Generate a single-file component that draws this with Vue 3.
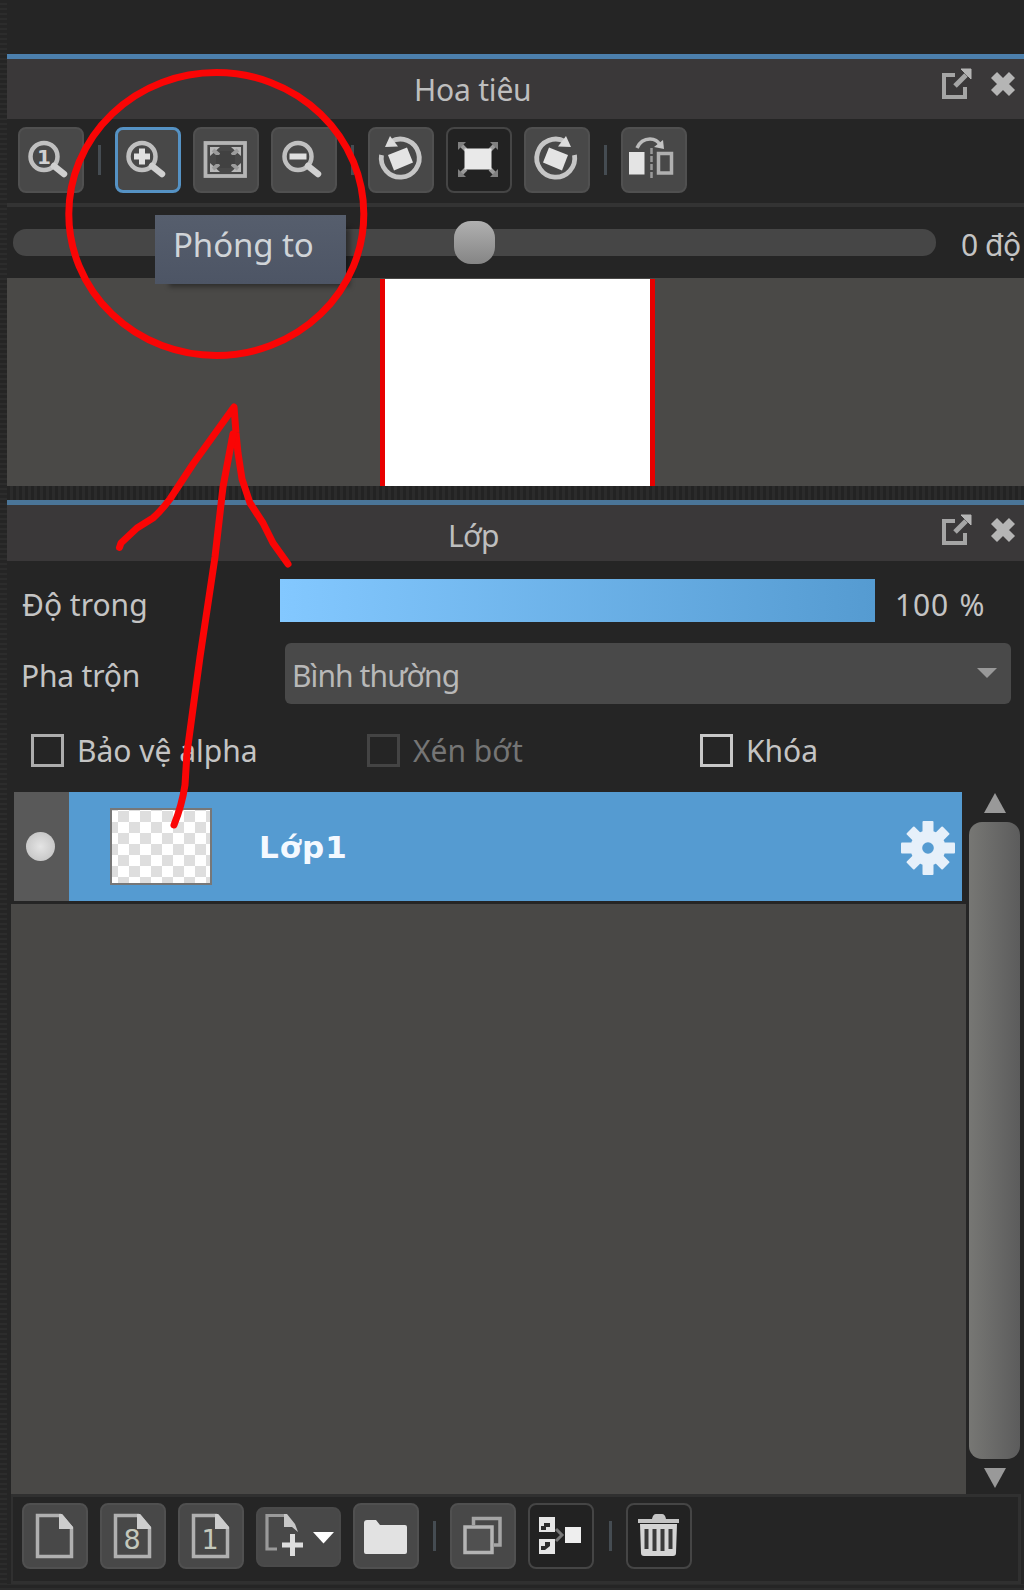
<template>
  <div class="app">
    <section class="panel navigator">
      <header class="title">
        <span class="caption nav-caption">Hoa tiêu</span>
        <svg class="title-icons" viewBox="0 0 84 36" v-html="titleIcons"></svg>
      </header>
      <div class="toolbar">
        <template v-for="(tool, i) in navTools" :key="i">
          <i v-if="tool.icon === 'sep'" class="sep"></i>
          <button v-else :class="['tool', tool.state]">
            <svg viewBox="0 0 66 66" v-html="icons[tool.icon]"></svg>
          </button>
        </template>
      </div>
      <div class="angle">
        <div class="track"><div class="knob"></div></div>
        <span class="angle-value">0 độ</span>
      </div>
      <div class="preview"><div class="canvas"></div></div>
      <div class="tooltip"><span>Phóng to</span></div>
    </section>
    <div class="splitter"></div>
    <section class="panel layers">
      <header class="title small">
        <span class="caption layer-caption">Lớp</span>
        <svg class="title-icons" viewBox="0 0 84 36" v-html="titleIcons"></svg>
      </header>
      <div class="row opacity">
        <span class="label label-opacity">Độ trong</span>
        <div class="bar"></div>
        <span class="percent">{{ opacity }} %</span>
      </div>
      <div class="row blend">
        <span class="label label-blend">Pha trộn</span>
        <div class="select">
          <span>Bình thường</span>
          <i class="caret"></i>
        </div>
      </div>
      <div class="checks">
        <label
          v-for="check in checks"
          :key="check.text"
          :class="['check', check.name]"
        >
          <i class="box"></i>
          <span>{{ check.text }}</span>
        </label>
      </div>
      <div class="body">
        <div class="list">
          <div class="layer">
            <div class="eye"><i></i></div>
            <div class="thumb"></div>
            <span class="name">Lớp1</span>
            <svg class="gear" viewBox="-27 -27 54 54">
              <g fill="#e6f0fa">
                <rect
                  v-for="n in 4"
                  :key="n"
                  x="-5.5"
                  :y="n % 2 ? -27 : -25.5"
                  width="11"
                  :height="n % 2 ? 54 : 51"
                  rx="1"
                  :transform="`rotate(${n * 45 - 45})`"
                />
                <circle r="17.5" />
              </g>
              <circle r="5.8" fill="#559bd1" />
            </svg>
          </div>
        </div>
        <div class="scroll">
          <i class="up"></i>
          <div class="handle"></div>
          <i class="down"></i>
        </div>
      </div>
      <div class="toolbar bottom">
        <template v-for="(tool, i) in layerTools" :key="i">
          <i v-if="tool.icon === 'sep'" class="sep"></i>
          <button v-else :class="['tool', tool.state]">
            <svg
              :viewBox="tool.state === 'wide' ? '0 0 85 60' : '0 0 66 66'"
              v-html="icons[tool.icon]"
            ></svg>
          </button>
        </template>
      </div>
    </section>
    <svg class="ink" viewBox="0 0 1024 1590">
      <g
        fill="none"
        stroke="#fa0505"
        stroke-width="7"
        stroke-linecap="round"
        stroke-linejoin="round"
      >
        <ellipse cx="216.3" cy="214" rx="147.5" ry="141.5" />
        <path
          d="M119.5 547.500L121 543L137 528L153 518Q161 511 170 499L193 464L234 407L236 433L238 453L242 479L250 503L263 523L273 543L288 564"
        />
        <path
          d="M233 434L223 487L215 557L200 657L187 753L185 785Q182 805 174 825"
        />
      </g>
    </svg>
  </div>
</template>
<script setup>
import { ref } from "vue";
const opacity = ref(100);
const checks = [
  { text: "Bảo vệ alpha", name: "protect" },
  { text: "Xén bớt", name: "clip" },
  { text: "Khóa", name: "lock" },
];
const navTools = [
  { icon: "zoomOne" },
  { icon: "sep" },
  { icon: "zoomIn", state: "active" },
  { icon: "fit" },
  { icon: "zoomOut" },
  { icon: "sep" },
  { icon: "rotateLeft" },
  { icon: "reset", state: "flat" },
  { icon: "rotateRight" },
  { icon: "sep" },
  { icon: "flip" },
];
const layerTools = [
  { icon: "page" },
  { icon: "page8" },
  { icon: "page1" },
  { icon: "pageAdd", state: "wide" },
  { icon: "folder" },
  { icon: "sep" },
  { icon: "copy" },
  { icon: "merge", state: "flat" },
  { icon: "sep" },
  { icon: "trash", state: "flat" },
];
const titleIcons = `
  <path d="M18 8H7V30H28V20" fill="none" stroke="#a5a5a5" stroke-width="4"/>
  <path d="M18 19L29 8" stroke="#a5a5a5" stroke-width="5"/>
  <path d="M24 2H34V12Z" fill="#b5b5b5" stroke="#b5b5b5"/>
  <path d="M57 8L75 26M75 8L57 26" stroke="#b5b5b5" stroke-width="8.5"/>`;
const lens = `
  <circle cx="27" cy="29.500" r="13.500" fill="none" stroke="#c0c0c0" stroke-width="4.500"/>
  <path d="M37 39L47 47" stroke="#d0d0d0" stroke-width="6.500" stroke-linecap="round"/>`;
const rotate = `
  <path d="M13.500 28A19 19 0 1 0 23 14.500" fill="none" stroke="#c6c6c6" stroke-width="4.800"/>
  <path d="M22 9L17 20L30 19.500Z" fill="#dcdcdc"/>
  <path d="M20 28L39 20.500L45 35.500L26 43.500Z" fill="#e4e4e4"/>`;
const sheet = `
  <path d="M39 12.500H15.500V53.500H49.500V25L39 12.500" fill="none" stroke="#b0b0b0" stroke-width="3.500"/>
  <path d="M37 11V26H51V24L40 11Z" fill="#cdcdcd"/>`;
const icons = {
  zoomOne: `<g transform="translate(-1 0)">${lens}</g>
    <text x="26" y="37" font-size="20" font-weight="bold" text-anchor="middle" fill="#d0d0d0">1</text>`,
  zoomIn: `${lens}<path d="M27 21.500V37.500M19 29.500H35" stroke="#e0e0e0" stroke-width="6"/>`,
  zoomOut: `${lens}<path d="M18.500 29.500H35.500" stroke="#e0e0e0" stroke-width="6"/>`,
  fit: `<rect x="12.500" y="16" width="39.500" height="33" fill="none" stroke="#b5b5b5" stroke-width="3.800"/>
    <path d="M17 20H27L17 29ZM48 20H38L48 29ZM17 45H27L17 36ZM48 45H38L48 36Z" fill="#b8b8b8"/>
    <path d="M20 23L26 28M45 23L39 28M20 42L26 37M45 42L39 37" stroke="#9c9c9c" stroke-width="4"/>
    <path d="M23 28H42V37H23ZM27 24H38V41H27Z" fill="#414141"/>`,
  rotateLeft: rotate,
  rotateRight: `<g transform="matrix(-1 0 0 1 64 0)">${rotate}</g>`,
  reset: `<path d="M14 17L20 23M50 17L44 23M14 48L20 42M50 48L44 42" stroke="#999" stroke-width="4"/>
    <path d="M12 15H20L12 23ZM52 15H44L52 23ZM12 50H20L12 42ZM52 50H44L52 42Z" fill="#808080"/>
    <rect x="18.500" y="21.500" width="27" height="21" fill="#e9e9e9"/>`,
  flip: `<rect x="8" y="25" width="15.500" height="22.500" fill="#e4e4e4"/>
    <path d="M30.500 21V51" stroke="#999" stroke-width="2.500" stroke-dasharray="6 2"/>
    <rect x="37.500" y="26.500" width="13" height="19.500" fill="none" stroke="#b0b0b0" stroke-width="3.500"/>
    <path d="M16 21Q20 12 29 12Q36 12 39 18" fill="none" stroke="#bbb" stroke-width="3.500"/>
    <path d="M33 20L42 13L43 22Z" fill="#c4c4c4"/>`,
  page: sheet,
  page8: `${sheet}<text x="32" y="46" font-size="27" text-anchor="middle" fill="#c4c8bc">8</text>`,
  page1: `${sheet}<text x="32" y="46" font-size="27" text-anchor="middle" fill="#c4c8bc">1</text>`,
  pageAdd: `<path d="M30 8.500H11V42H21" fill="none" stroke="#9a9a9a" stroke-width="3.200"/>
    <path d="M28 7V20H36L42 25L39 17L31 7Z" fill="#c8c8c8"/>
    <path d="M36.500 27V49M26 38H47" stroke="#ddd" stroke-width="5"/>
    <path d="M57 25H78L67.500 36.500Z" fill="#fff"/>`,
  folder: `<path d="M11 20Q11 17 14 17H23L27 22H52Q54 22 54 24V49Q54 51 52 51H13Q11 51 11 49Z" fill="#e2e2e2"/>`,
  copy: `<path d="M23.500 22V15.500H50V42H44" fill="none" stroke="#a5a5a5" stroke-width="3.500"/>
    <rect x="15" y="24" width="27" height="25.500" fill="#505050" stroke="#b4b4b4" stroke-width="3.500"/>`,
  merge: `<path d="M11 14H27V29H11ZM11 36H27V51H11Z" fill="#e6e6e6"/>
    <path d="M16 20H22V24H18V27H13V23H16ZM22 39H17V43H13V47H17L22 43Z" fill="#2c2c2c"/>
    <path d="M28 26L34 32L28 38" fill="none" stroke="#777" stroke-width="3"/>
    <rect x="37" y="24" width="16" height="16" fill="#eee"/>`,
  trash: `<path d="M12 16H26Q27 11 30 11H36Q39 11 40 16H53V20H12Z" fill="#c4c4c4"/>
    <path d="M14 21H51L50 50Q50 53 47 53H18Q15 53 15 50Z" fill="#d4d4d4"/>
    <path d="M20.500 26V46M28.500 26V48M36.500 26V48M44.500 26V46" stroke="#3a3a3a" stroke-width="4"/>`,
};
</script>
<style>
body {
  background: #252525;
}
</style>
<style scoped>
.app {
  position: relative;
  box-sizing: border-box;
  width: 1024px;
  height: 1590px;
  padding: 54px 0 0 7px;
  overflow: hidden;
  color: #c4c4c4;
  font-family: "Noto Sans", sans-serif;
  font-size: 30px;
  line-height: 36px;
  white-space: nowrap;
  background:
    linear-gradient(#252525, #252525) 7px 0 / 100% 1584px no-repeat,
    repeating-linear-gradient(#252525 0 3px, #2c2c2c 3px 5px);
}
.panel {
  position: relative;
  border-top: 5px solid #4c7fac;
}
.navigator {
  height: 427px;
}
.title {
  display: flex;
  justify-content: flex-end;
  height: 60px;
  padding-right: 3px;
  background: #3a3839;
}
.title.small {
  height: 56px;
}
.caption {
  width: 523px;
  margin-top: 13px;
  color: #bebebe;
}
.nav-caption {
  letter-spacing: -0.2px;
}
.layer-caption {
  width: 489px;
  letter-spacing: -0.6px;
}
.title-icons {
  width: 84px;
  height: 36px;
  margin-top: 8px;
}
.toolbar {
  display: flex;
  gap: 11.7px;
  box-sizing: border-box;
  height: 88px;
  padding: 8px 0 0 11px;
  border-bottom: 4px solid #333;
}
.tool {
  flex: none;
  box-sizing: border-box;
  width: 66px;
  height: 66px;
  padding: 0;
  background: #484848;
  border: 2.5px solid #505050;
  border-radius: 8px;
}
.tool svg {
  display: block;
  width: 66px;
  height: 66px;
  margin: -2px;
  font-family: "DejaVu Sans", sans-serif;
}
.tool.active {
  border: 3px solid #5592c4;
}
.tool.active svg {
  margin: -3px;
}
.tool.flat {
  background: #222;
  border-color: #454545;
}
.tool.wide {
  width: 85px;
  height: 60px;
  margin-top: 4px;
  border-color: #4a4a4a;
}
.tool.wide svg {
  width: 85px;
  height: 60px;
}
.sep {
  flex: none;
  width: 3px;
  height: 30px;
  margin: 18px 2.5px;
  background: #454c52;
}
.angle {
  display: flex;
  align-items: center;
  height: 71px;
  padding-left: 6px;
}
.track {
  flex: none;
  width: 923px;
  height: 27px;
  border-radius: 13px;
  background: #464646;
}
.knob {
  width: 41px;
  height: 43px;
  margin: -8px 0 0 441px;
  border-radius: 17px;
  background: linear-gradient(#b0b0b0, #858585);
}
.angle-value {
  margin: 4px 0 0 25px;
  letter-spacing: -0.5px;
}
.preview {
  height: 208px;
  background: #4a4947;
}
.canvas {
  width: 265px;
  height: 207px;
  margin-left: 373px;
  border: solid #e80000;
  border-width: 0 5px;
  background: #fff;
  transform: translateY(1px);
}
.tooltip {
  position: absolute;
  top: 156px;
  left: 148px;
  box-sizing: border-box;
  width: 191px;
  height: 69px;
  padding: 12px 18px;
  color: #d0d4d8;
  font-size: 33px;
  letter-spacing: -0.1px;
  background: linear-gradient(#565e6d, #4d5565);
  box-shadow: 9px 8px 5px -5px #00000060;
}
.splitter {
  height: 14px;
  background: repeating-linear-gradient(90deg, #232323 0 3px, #2b2b2b 3px 6px);
}
.layers {
  border-top-color: #4a7598;
}
.row {
  display: flex;
}
.opacity {
  padding-top: 18px;
}
.label {
  flex: none;
  width: 273px;
  padding-left: 15px;
  box-sizing: border-box;
}
.label-opacity {
  margin-top: 8px;
}
.bar {
  width: 595px;
  height: 43px;
  background: linear-gradient(90deg, #83c8ff, #559bd1);
}
.percent {
  margin: 8px 0 0 20px;
  word-spacing: 2px;
  letter-spacing: 0.8px;
}
.blend {
  margin-top: 20px;
}
.label-blend {
  width: 278px;
  margin-top: 15px;
  padding-left: 14px;
  letter-spacing: -0.2px;
}
.select {
  display: flex;
  justify-content: space-between;
  align-items: center;
  box-sizing: border-box;
  width: 726px;
  height: 61px;
  padding: 5px 14px 0 7px;
  color: #b8b8b8;
  letter-spacing: -0.9px;
  background: #494949;
  border-radius: 6px;
}
.caret {
  margin-top: -6px;
  border: 10px solid transparent;
  border-top-color: #999;
  border-bottom: 0;
}
.checks {
  display: flex;
  height: 88px;
  padding: 30px 0 0 24px;
  box-sizing: border-box;
}
.check {
  display: flex;
  flex: none;
  gap: 13px;
}
.check span {
  margin-top: -1px;
}
.protect {
  width: 336px;
}
.clip {
  width: 333px;
}
.box {
  flex: none;
  box-sizing: border-box;
  width: 33px;
  height: 33px;
  border: 3px solid #adadad;
}
.lock .box {
  border-color: #c8c8c8;
}
.clip {
  color: #757575;
}
.clip .box {
  border-color: #444;
}
.body {
  display: flex;
  height: 702px;
}
.list {
  flex: none;
  width: 955px;
  margin-left: 4px;
  background: linear-gradient(#252525 112px, #494846 112px);
}
.layer {
  display: flex;
  align-items: center;
  width: 948px;
  height: 109px;
  margin-left: 3px;
  background: #559bd1;
}
.eye {
  display: flex;
  align-items: center;
  justify-content: center;
  width: 55px;
  height: 109px;
  background: #595959;
}
.eye i {
  width: 29px;
  height: 29px;
  margin-right: 3px;
  border-radius: 50%;
  background: radial-gradient(#e4e4e4, #bdbdbd);
}
.thumb {
  width: 98px;
  height: 73px;
  margin-left: 41px;
  border: 2px solid #777;
  background: conic-gradient(#fff 25%, #dedede 0 50%, #fff 0 75%, #dedede 0) 6px
    1px / 22px 22px;
}
.name {
  margin: 0 0 0 47px;
  color: #f4f9ff;
  font-family: "DejaVu Sans", sans-serif;
  font-weight: bold;
  font-size: 31px;
  letter-spacing: 1px;
}
.gear {
  width: 54px;
  height: 54px;
  margin: 3px 7px 0 auto;
}
.scroll {
  display: flex;
  flex-direction: column;
  align-items: center;
  width: 57px;
}
.up {
  margin-top: 1px;
  border: 11px solid transparent;
  border-top: 0;
  border-bottom: 20px solid #999;
}
.handle {
  width: 51px;
  height: 637px;
  margin: 9px 0;
  border-radius: 13px;
  background: linear-gradient(90deg, #777774, #5c5c5c);
}
.down {
  border: 11px solid transparent;
  border-bottom: 0;
  border-top: 20px solid #999;
}
.toolbar.bottom {
  gap: 11.9px;
  height: 90px;
  margin: 0 3px 0 4px;
  padding: 6px 0 0 9px;
  border: 3px solid #303030;
  border-left-width: 2px;
}
.ink {
  position: absolute;
  top: 0;
  left: 0;
  width: 1024px;
  height: 1590px;
  pointer-events: none;
}
</style>
